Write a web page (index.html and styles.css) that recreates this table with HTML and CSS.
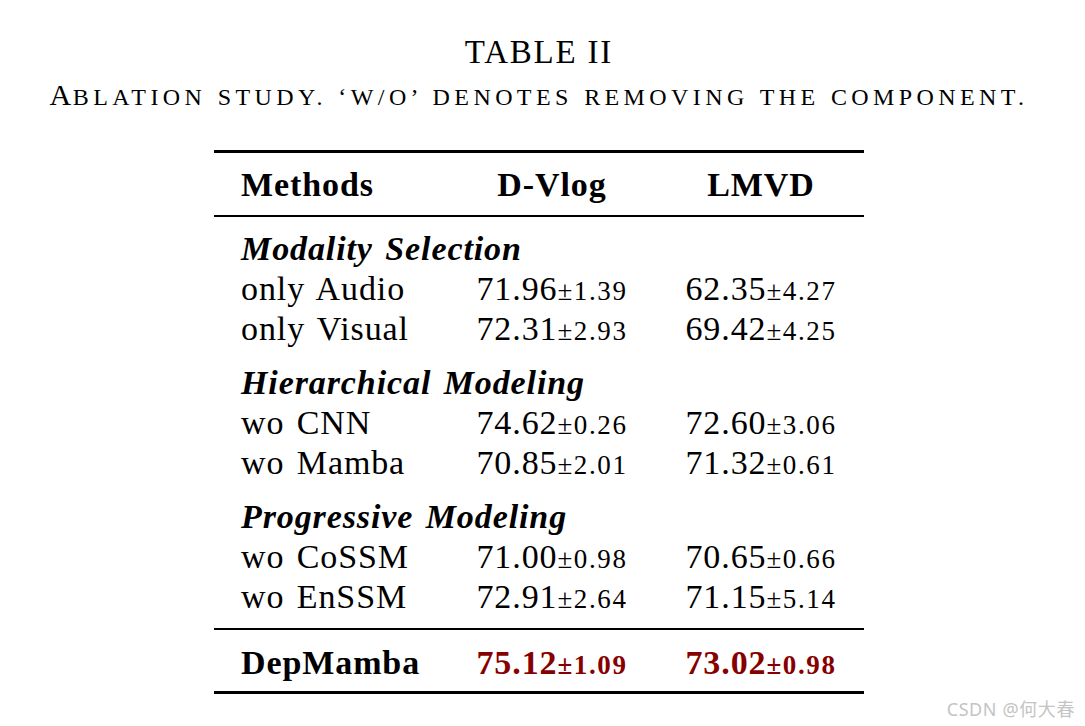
FILE: index.html
```html
<!DOCTYPE html>
<html lang="en">
<head>
<meta charset="utf-8">
<title>Table II</title>
<link rel="stylesheet" href="styles.css">
</head>
<body>
<div class="page">
  <header class="caption">
    <div class="title">TABLE II</div>
    <div class="subtitle">A<span class="sc">blation study. ‘w/o’ denotes removing the component.</span></div>
  </header>

  <div class="table">
    <div class="rule heavy"></div>
    <div class="grid head">
      <div class="c1">Methods</div>
      <div class="c">D-Vlog</div>
      <div class="c">LMVD</div>
    </div>
    <div class="rule mid"></div>

    <div class="group first">
      <div class="gtitle">Modality Selection</div>
      <div class="grid row">
        <div class="c1">only Audio</div>
        <div class="c">71.96<span class="sd">±1.39</span></div>
        <div class="c">62.35<span class="sd">±4.27</span></div>
      </div>
      <div class="grid row">
        <div class="c1">only Visual</div>
        <div class="c">72.31<span class="sd">±2.93</span></div>
        <div class="c">69.42<span class="sd">±4.25</span></div>
      </div>
    </div>

    <div class="group">
      <div class="gtitle">Hierarchical Modeling</div>
      <div class="grid row">
        <div class="c1">wo CNN</div>
        <div class="c">74.62<span class="sd">±0.26</span></div>
        <div class="c">72.60<span class="sd">±3.06</span></div>
      </div>
      <div class="grid row">
        <div class="c1">wo Mamba</div>
        <div class="c">70.85<span class="sd">±2.01</span></div>
        <div class="c">71.32<span class="sd">±0.61</span></div>
      </div>
    </div>

    <div class="group last">
      <div class="gtitle">Progressive Modeling</div>
      <div class="grid row">
        <div class="c1">wo CoSSM</div>
        <div class="c">71.00<span class="sd">±0.98</span></div>
        <div class="c">70.65<span class="sd">±0.66</span></div>
      </div>
      <div class="grid row">
        <div class="c1">wo EnSSM</div>
        <div class="c">72.91<span class="sd">±2.64</span></div>
        <div class="c">71.15<span class="sd">±5.14</span></div>
      </div>
    </div>

    <div class="rule mid"></div>
    <div class="grid final">
      <div class="c1">DepMamba</div>
      <div class="c red">75.12<span class="sd">±1.09</span></div>
      <div class="c red">73.02<span class="sd">±0.98</span></div>
    </div>
    <div class="rule heavy"></div>
  </div>

  <div class="watermark">CSDN @何大春</div>
</div>
</body>
</html>
```

FILE: styles.css
```css
html, body {
  margin: 0;
  padding: 0;
  background: #ffffff;
}

.page {
  position: relative;
  width: 1085px;
  height: 726px;
  overflow: hidden;
  font-family: "Liberation Serif", "Times New Roman", serif;
  color: #000;
}

.caption {
  padding-top: 31px;
  padding-right: 7px;
  text-align: center;
}

.title {
  font-size: 33px;
  line-height: 42px;
  letter-spacing: 1.8px;
}

.subtitle {
  font-size: 30px;
  line-height: 43px;
  letter-spacing: 1.6px;
  white-space: nowrap;
}

.sc {
  text-transform: uppercase;
  font-size: 24px;
  letter-spacing: 4.4px;
  word-spacing: 1px;
  line-height: 1;
}

.table {
  width: 650px;
  margin: 34px 0 0 214px;
  font-size: 34px;
  letter-spacing: 0.9px;
}

.rule {
  background: #000;
}

.rule.heavy {
  height: 3px;
}

.rule.mid {
  height: 2px;
}

.grid {
  display: grid;
  grid-template-columns: auto auto auto;
  justify-content: space-between;
  column-gap: 55px;
  padding: 0 27px;
  line-height: 40px;
}

.c1 {
  width: 179px;
  text-align: left;
  white-space: nowrap;
}

.c {
  width: 154px;
  text-align: center;
  white-space: nowrap;
}

.row .c1 {
  word-spacing: 3px;
}

.head {
  font-weight: bold;
  padding-top: 12px;
  padding-bottom: 10px;
}

.group {
  padding-top: 14px;
}

.group.first {
  padding-top: 12px;
}

.group.last {
  padding-bottom: 11px;
}

.gtitle {
  font-weight: bold;
  font-style: italic;
  padding-left: 27px;
  line-height: 40px;
  word-spacing: 3px;
}

.final {
  font-weight: bold;
  padding-top: 13px;
  padding-bottom: 8px;
}

.sd {
  font-size: 27px;
  letter-spacing: 1.6px;
  line-height: 1;
}

.red {
  color: #870000;
}

.watermark {
  position: absolute;
  right: 10px;
  bottom: 6px;
  font-family: "Noto Sans", "Noto Sans CJK SC", sans-serif;
  font-size: 18px;
  line-height: 22px;
  color: #c4c4c4;
  letter-spacing: 0.6px;
}
```
